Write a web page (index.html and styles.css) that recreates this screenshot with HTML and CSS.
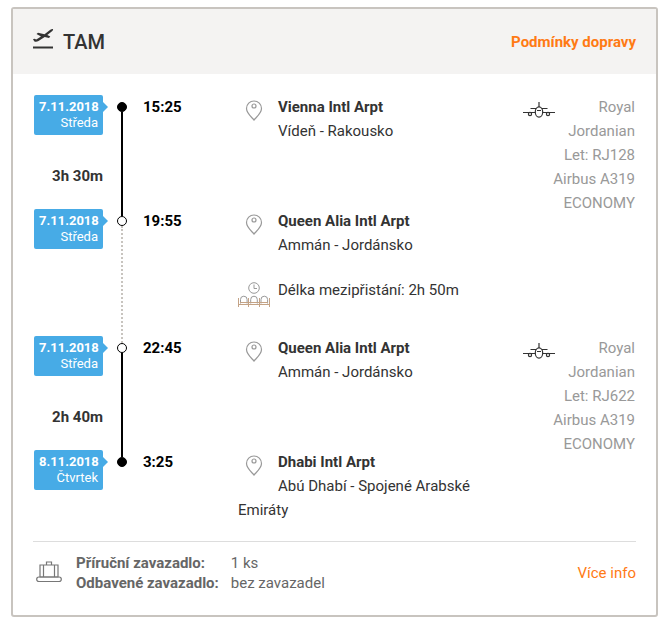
FILE: index.html
```html
<!DOCTYPE html>
<html lang="cs">
<head>
    <meta charset="UTF-8">
    <meta name="viewport" content="width=device-width, initial-scale=1.0">
    <title>TAM</title>
    <link rel="stylesheet" href="styles.css">
</head>
<body>

    <!-- shared icons -->
    <svg class="sprite" aria-hidden="true">
        <symbol id="pin" viewBox="0 0 32 24">
            <path d="M16 20C13 16.500 8.500 13 8.500 8.500a7.500 7.500 0 0 1 15 0C23.500 13 19 16.500 16 20z"/>
            <circle cx="16" cy="6" r="2"/>
        </symbol>
        <symbol id="plane" viewBox="0 0 32 18">
            <path d="M16 1v5M7.500 7.500H13M19 7.500h5.500M0 11.500h12.500M19.500 11.500H32M14 9.500h4"/>
            <ellipse cx="16" cy="11" rx="3.700" ry="5.200"/>
            <circle cx="7" cy="13" r="1.600"/>
            <circle cx="25" cy="13" r="1.600"/>
        </symbol>
    </svg>

    <div class="card">
        <div class="card-header">
            <h2 class="title">
                <svg class="takeoff" viewBox="0 0 20 20" aria-hidden="true">
                    <path d="M0 17.500h20v2H0z"/>
                    <path d="M0 10.300l1.300-.6 2 .7L8 7.600 3.500 5l1.500-1.200 6.500 1.500L17.300.8C18.500 0 19.700-.3 20 .2s-.3 1.500-1.300 2.300L14.300 6l3 1.600-1.300 1.300-4.300-1L5.500 12c-1.500.9-3.300 1-4.300.2z"/>
                </svg>
                TAM
            </h2>
            <a class="terms" href="#">Podmínky dopravy</a>
        </div>

        <div class="flights">
            <div class="leg">
                <div class="day">
                    <div class="badge"><b>7.11.2018</b><br>Středa</div>
                    <div class="duration">3h 30m</div>
                </div>
                <div class="rail"><span class="dot full"></span><span class="line"></span></div>
                <div class="time">15:25</div>
                <div class="place">
                    <svg class="icon pin"><use href="#pin"/></svg>
                    <b>Vienna Intl Arpt</b><br>Vídeň - Rakousko
                </div>
                <div class="airline">
                    <svg class="icon plane"><use href="#plane"/></svg>
                    Royal Jordanian<br>Let: RJ128<br>Airbus A319<br>ECONOMY
                </div>

                <div class="day">
                    <div class="badge"><b>7.11.2018</b><br>Středa</div>
                </div>
                <div class="rail"><span class="dot"></span><span class="line dotted"></span></div>
                <div class="time">19:55</div>
                <div class="place">
                    <svg class="icon pin"><use href="#pin"/></svg>
                    <b>Queen Alia Intl Arpt</b><br>Ammán - Jordánsko
                    <div class="layover">
                        <svg class="icon wait" viewBox="0 0 32 26" aria-hidden="true">
                            <g class="gray">
                                <circle cx="16" cy="6" r="5.300"/>
                                <path d="M16 2.500V6.500h3"/>
                            </g>
                            <path d="M.5 16v9M10.500 16v9M21.500 16v9M31.500 16v9M.5 22.500h31"/>
                            <path class="gray" d="M2.500 21.500v-4a3.300 3.300 0 0 1 6.600 0v4M12.700 21.500v-4a3.300 3.300 0 0 1 6.600 0v4M23 21.500v-4a3.300 3.300 0 0 1 6.600 0v4"/>
                            <path d="M2 20.500h28"/>
                        </svg>
                        Délka mezipřistání: 2h 50m
                    </div>
                </div>
            </div>

            <div class="leg">
                <div class="day">
                    <div class="badge"><b>7.11.2018</b><br>Středa</div>
                    <div class="duration">2h 40m</div>
                </div>
                <div class="rail"><span class="dot"></span><span class="line"></span></div>
                <div class="time">22:45</div>
                <div class="place">
                    <svg class="icon pin"><use href="#pin"/></svg>
                    <b>Queen Alia Intl Arpt</b><br>Ammán - Jordánsko
                </div>
                <div class="airline">
                    <svg class="icon plane"><use href="#plane"/></svg>
                    Royal Jordanian<br>Let: RJ622<br>Airbus A319<br>ECONOMY
                </div>

                <div class="day">
                    <div class="badge"><b>8.11.2018</b><br>Čtvrtek</div>
                </div>
                <div class="rail"><span class="dot full"></span></div>
                <div class="time">3:25</div>
                <div class="place">
                    <svg class="icon pin"><use href="#pin"/></svg>
                    <b>Dhabi Intl Arpt</b><br>Abú Dhabí - Spojené Arabské Emiráty
                </div>
            </div>
        </div>

        <div class="card-footer">
            <svg class="luggage" viewBox="0 0 26 22" aria-hidden="true">
                <rect x=".7" y="16" width="24.600" height="4.500" rx="2.200"/>
                <path d="M10.500 4V1h5v3M4 4h18v12H4zM7.500 4v12M18.500 4v12"/>
            </svg>
            <dl class="bags">
                <dt>Příruční zavazadlo:</dt>
                <dd>1 ks</dd>
                <dt>Odbavené zavazadlo:</dt>
                <dd>bez zavazadel</dd>
            </dl>
            <a class="more" href="#">Více info</a>
        </div>
    </div>

</body>
</html>
```

FILE: styles.css
```css
body {
    margin: 7px 7px 8px 11px;
    background-color: #fff;
    color: #333;
    font-family: Roboto, Arial, sans-serif;
    font-size: 15px;
    line-height: 24px;
}

a {
    color: #ff7a14;
    text-decoration: none;
}

a:hover {
    text-decoration: underline;
}

.sprite {
    display: none;
}

.card {
    border: 2px solid #c8c4bf;
    border-radius: 3px;
}

.card-header {
    display: flex;
    align-items: center;
    justify-content: space-between;
    height: 65px;
    padding: 0 20px;
    background-color: #f4f3f2;
}

.title {
    display: flex;
    align-items: center;
    gap: 10px;
    margin: 0;
    font-size: 20px;
    font-weight: 500;
}

.takeoff {
    width: 20px;
    height: 20px;
    margin-bottom: 6px;
    fill: #333;
    overflow: visible;
}

.terms {
    font-weight: bold;
}

.flights {
    padding: 21px 21px 19px;
}

/* one leg = departure row + arrival row, airline next to both */
.leg {
    display: grid;
    grid-template-columns: 69px 40px 95px 1fr 112px;
    grid-template-rows: minmax(114px, auto) auto;
}

.leg:first-child {
    grid-template-rows: minmax(114px, auto) minmax(127px, auto);
}

.badge {
    position: relative;
    padding: 4px 5px;
    border-radius: 2px;
    background-color: #47abe6;
    color: #fff;
    font-size: 13px;
    line-height: 16px;
    text-align: right;
}

.badge::after {
    content: "";
    position: absolute;
    top: 7px;
    left: 100%;
    border: 5px solid transparent;
    border-left-color: #47abe6;
    border-right: 0;
}

.duration {
    margin-top: 29px;
    font-weight: bold;
    text-align: right;
}

.rail {
    display: flex;
    flex-direction: column;
    width: 10px;
    padding: 7px 0 0 14px;
}

.dot {
    box-sizing: border-box;
    height: 10px;
    border: 1px solid #000;
    border-radius: 50%;
}

.dot.full {
    background-color: #000;
}

.line {
    flex: 1;
    align-self: center;
    margin-bottom: -7px;
    border-left: 2px solid #000;
}

.line.dotted {
    border-left: 2px dotted #c8c4bf;
}

.time {
    color: #000;
    font-weight: bold;
}

.icon {
    float: left;
    width: 32px;
    fill: none;
    stroke: #999;
}

.pin {
    height: 24px;
    margin: 5px 8px 0 0;
    stroke-width: 1.2;
}

.plane {
    height: 18px;
    margin-top: 6px;
    stroke: #333;
    stroke-width: 1.2;
}

.layover {
    margin-top: 21px;
}

.wait {
    height: 26px;
    margin: 4px 8px 0 0;
    stroke: #c4a386;
}

.gray {
    stroke: #999;
}

.airline {
    grid-column: 5;
    grid-row: 1 / 3;
    color: #999;
    text-align: right;
}

.card-footer {
    display: flex;
    align-items: center;
    margin: 0 20px;
    padding: 11px 0 22px;
    border-top: 1px solid #ddd;
    color: #666;
    line-height: 20px;
}

.luggage {
    width: 26px;
    height: 22px;
    margin: 0 14px 2px 3px;
    fill: none;
    stroke: #777;
    stroke-width: 1.2;
}

.bags {
    display: grid;
    grid-template-columns: auto auto;
    column-gap: 12px;
    margin: 0;
}

.bags dt {
    font-weight: bold;
}

.bags dd {
    margin: 0;
}

.more {
    margin-left: auto;
}
```
